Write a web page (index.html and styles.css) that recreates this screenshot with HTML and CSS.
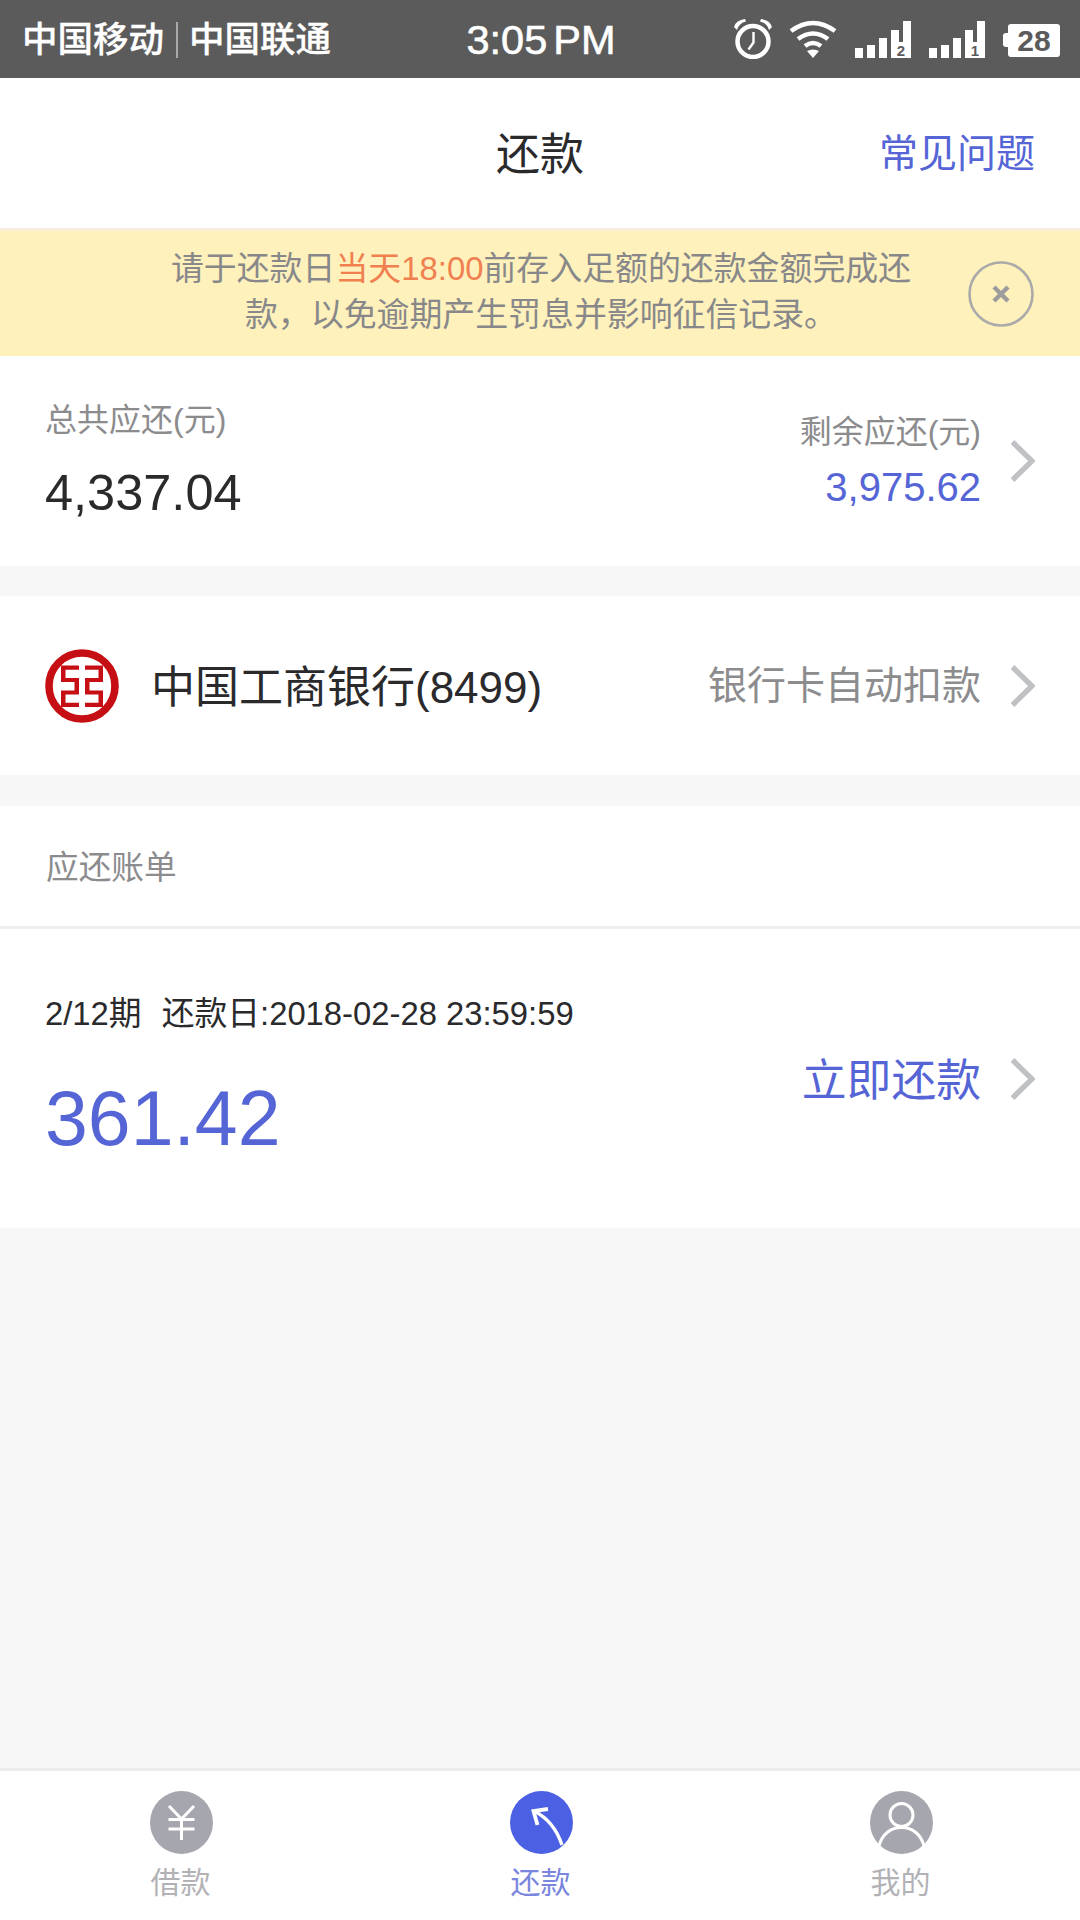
FILE: index.html
```html
<!DOCTYPE html>
<html lang="zh-CN">
<head>
<meta charset="utf-8">
<title>还款</title>
<link rel="stylesheet" href="styles.css">
</head>
<body>
<div class="app">
  <header class="status">
    <div class="carriers"><span>中国移动</span><i class="carrier-sep"></i><span>中国联通</span></div>
    <div class="clock">3:05<span class="ampm">PM</span></div>
    <div class="status-icons">
      <svg class="ic-alarm" width="38" height="40" viewBox="0 0 38 40"><circle cx="19" cy="22.500" r="15.500" fill="none" stroke="#fff" stroke-width="4.500"/><path d="M19.500 13v10.500l-5 7" fill="none" stroke="#fff" stroke-width="2.400"/><path d="M0 8Q2 1 11 0L12 2.500Q5 4 3 11ZM38 8Q36 1 27 0L26 2.500Q33 4 35 11Z" fill="#fff"/></svg>
      <svg class="ic-wifi" width="48" height="38" viewBox="0 0 48 38"><g fill="none" stroke="#fff" stroke-width="4.600"><path d="M2 11Q24-5 46 11"/><path d="M9 19Q24 8 39 19"/><path d="M16 26Q24 20 32 26"/></g><path d="M18 31Q24 28 30 31L24 38Z" fill="#fff"/></svg>
      <svg class="ic-sig" width="56" height="37" viewBox="0 0 56 37"><path d="M0 27h8v10H0zM12 24h8v13h-8zM24 17h8v20h-8zM36 9h8v12h4V0h8v37H36z" fill="#fff"/><text x="46" y="35" class="sig-num">2</text></svg>
      <svg class="ic-sig" width="56" height="37" viewBox="0 0 56 37"><path d="M0 27h8v10H0zM12 24h8v13h-8zM24 17h8v20h-8zM36 9h8v12h4V0h8v37H36z" fill="#fff"/><text x="46" y="35" class="sig-num">1</text></svg>
      <div class="battery"><i class="battery-tip"></i><span class="battery-body">28</span></div>
    </div>
  </header>

  <nav class="navbar">
    <h1 class="nav-title">还款</h1>
    <a class="nav-link">常见问题</a>
  </nav>

  <section class="notice">
    <p class="notice-text">请于还款日<span class="hl">当天18:00</span>前存入足额的还款金额完成还款，以免逾期产生罚息并影响征信记录。</p>
    <svg class="notice-close" width="66" height="66" viewBox="0 0 66 66"><circle cx="33" cy="33" r="31.500" fill="none" stroke="#aaaaaa" stroke-width="2.600"/><path d="M26 26l14 14M40 26L26 40" fill="none" stroke="#9c9c9c" stroke-width="4.400"/></svg>
  </section>

  <section class="card summary">
    <div class="summary-left">
      <div class="label">总共应还(元)</div>
      <div class="total">4,337.04</div>
    </div>
    <div class="summary-right">
      <div class="label">剩余应还(元)</div>
      <div class="remain">3,975.62</div>
    </div>
    <svg class="chev" width="24" height="44" viewBox="0 0 24 44"><path d="M1.500 3L21 22 1.500 41" fill="none" stroke="#c0c1c5" stroke-width="5.400"/></svg>
  </section>

  <section class="card bank">
    <svg class="bank-logo" width="74" height="74" viewBox="0 0 74 74">
      <circle cx="37" cy="37" r="33" fill="none" stroke="#c50f14" stroke-width="7.600"/>
      <path d="M16 16.500H34v4.200H20.500V29H34v16.500H20.500v8.300H34V58H16V41.500H29.500V33H16zM58 16.500H40v4.200H53.500V29H40v16.500H53.500v8.300H40V58H58V41.500H44.500V33H58z" fill="#c50f14"/>
    </svg>
    <div class="bank-name">中国工商银行(8499)</div>
    <div class="bank-mode">银行卡自动扣款</div>
    <svg class="chev" width="24" height="44" viewBox="0 0 24 44"><path d="M1.500 3L21 22 1.500 41" fill="none" stroke="#c0c1c5" stroke-width="5.400"/></svg>
  </section>

  <section class="bills">
    <div class="bills-head">应还账单</div>
    <div class="bill">
      <div class="bill-info">
        <div class="bill-meta">2/12期<span class="meta-gap"></span>还款日:2018-02-28 23:59:59</div>
        <div class="bill-amount">361.42</div>
      </div>
      <div class="bill-action">立即还款</div>
      <svg class="chev" width="24" height="44" viewBox="0 0 24 44"><path d="M1.500 3L21 22 1.500 41" fill="none" stroke="#c0c1c5" stroke-width="5.400"/></svg>
    </div>
  </section>

  <div class="spacer"></div>

  <footer class="tabbar">
    <div class="tab">
      <svg class="tab-icon" width="63" height="63" viewBox="0 0 63 63"><circle cx="31.500" cy="31.500" r="31.500" fill="#a6a6ae"/><path d="M19 15l12.500 13L44 15M18.500 28.500h26M18.500 38h26M31.500 28v21" fill="none" stroke="#fff" stroke-width="3"/></svg>
      <span class="tab-label">借款</span>
    </div>
    <div class="tab tab-active">
      <svg class="tab-icon" width="63" height="63" viewBox="0 0 63 63"><circle cx="31.500" cy="31.500" r="31.500" fill="#4b60e2"/><path d="M52 54C47 39 38 27 24 20" fill="none" stroke="#fff" stroke-width="3.400"/><path d="M38 18L23.500 20l4 14" fill="none" stroke="#fff" stroke-width="3.800"/></svg>
      <span class="tab-label">还款</span>
    </div>
    <div class="tab">
      <svg class="tab-icon" width="63" height="63" viewBox="0 0 63 63"><circle cx="31.500" cy="31.500" r="31.500" fill="#a6a6ae"/><circle cx="31.500" cy="24" r="11.500" fill="none" stroke="#fff" stroke-width="3"/><path d="M9 55C12 43 21 36.500 31.500 36.500S51 43 54 55" fill="none" stroke="#fff" stroke-width="3"/></svg>
      <span class="tab-label">我的</span>
    </div>
  </footer>
</div>
</body>
</html>
```

FILE: styles.css
```css
* { box-sizing: border-box; }
html, body { margin: 0; padding: 0; }
body {
  width: 1080px;
  height: 1920px;
  overflow: hidden;
  font-family: "Liberation Sans", "Noto Sans CJK SC", sans-serif;
  color: #2a2a2c;
  background: #f7f7f7;
}
.app { height: 1920px; display: flex; flex-direction: column; }

.status {
  height: 78px;
  flex: none;
  background: #5b5b5b;
  color: #fff;
  display: grid;
  grid-template-columns: 1fr auto 1fr;
  align-items: center;
  padding: 2px 20px 0 22px;
}
.carriers { display: flex; align-items: center; font-size: 35.500px; font-weight: 500; line-height: 40px; -webkit-text-stroke: .3px #fff; }
.carrier-sep { width: 2px; height: 36px; background: #a9a9a9; margin: 0 11px 0 12px; }
.clock { font-size: 41.500px; line-height: 46px; -webkit-text-stroke: .6px #fff; }
.ampm { margin-left: 6px; }
.status-icons { display: flex; align-items: center; justify-content: flex-end; margin-top: -2px; }
.ic-alarm { margin-right: 17px; }
.ic-wifi { margin-right: 18px; }
.ic-sig { margin-right: 18px; }
.sig-num { font-family: "Liberation Sans", sans-serif; font-size: 15px; font-weight: 700; fill: #5b5b5b; text-anchor: middle; }
.battery { display: flex; align-items: center; margin-top: 2px; }
.battery-tip { width: 5px; height: 14px; background: #fff; border-radius: 3px 0 0 3px; }
.battery-body {
  width: 52px; height: 33px; background: #fff; border-radius: 3px;
  color: #5b5b5b; font-size: 30px; font-weight: 700; line-height: 33px; text-align: center;
}

.navbar {
  height: 150px;
  flex: none;
  background: #fff;
  display: flex;
  align-items: center;
  justify-content: center;
  position: relative;
  padding-top: 3px;
}
.nav-title { margin: 0; font-size: 44px; font-weight: 400; line-height: 60px; color: #2a2a2c; }
.nav-link { position: absolute; right: 45px; top: 50%; transform: translateY(-48%); font-size: 39px; line-height: 50px; color: #5565d6; }

.notice {
  height: 128px;
  flex: none;
  background: #fef1bb;
  border-top: 3px solid #f9eedd;
  display: flex;
  align-items: center;
  padding: 0 35px 0 169px;
  color: #88888a;
}
.notice-text { margin: 0 0 3px; width: 744px; font-size: 32.900px; line-height: 46px; text-align: center; }
.hl { color: #f08050; }
.notice-close { margin-left: 55px; flex: none; }

.card { background: #fff; display: flex; align-items: center; padding: 0 45px; }
.label { font-size: 32px; line-height: 40px; color: #8c8c8e; }
.chev { flex: none; margin-left: 30px; }

.summary { height: 210px; flex: none; }
.summary-left { flex: 1; margin-top: 6px; }
.summary-left .label { transform: translateY(-6px); }
.total { font-size: 50.500px; line-height: 60px; margin-top: 17px; color: #2a2a2c; }
.summary-right { text-align: right; margin-top: 1px; }
.remain { font-size: 40px; line-height: 50px; color: #5565d6; margin-top: 10px; }

.bank { height: 179px; flex: none; margin-top: 30px; }
.bank-logo { flex: none; }
.bank-name { flex: 1; margin-left: 32px; margin-top: 4px; font-size: 44px; line-height: 60px; color: #2a2a2c; }
.bank-mode { font-size: 39px; line-height: 50px; color: #8c8c8e; margin-top: 1px; }

.bills { margin-top: 31px; flex: none; background: #fff; }
.bills-head {
  height: 123px;
  padding: 45px 0 0 46px;
  font-size: 32.700px;
  line-height: 34px;
  color: #8c8c8e;
  border-bottom: 3px solid #efefef;
}
.bill { height: 299px; display: flex; align-items: center; padding: 0 45px; }
.bill-info { flex: 1; margin-top: -1px; }
.bill-meta { font-size: 32.800px; line-height: 40px; color: #2a2a2c; display: flex; align-items: center; }
.meta-gap { width: 20px; }
.bill-amount { font-size: 77px; line-height: 90px; margin-top: 39px; color: #5565d6; }
.bill-action { font-size: 44.800px; line-height: 56px; color: #5565d6; margin-top: 2px; }

.spacer { flex: 1; }

.tabbar {
  height: 152px;
  flex: none;
  background: #fff;
  border-top: 3px solid #ededed;
  display: grid;
  grid-template-columns: repeat(3, 360px);
  padding: 20px 0 0 1px;
}
.tab { display: flex; flex-direction: column; align-items: center; }
.tab-icon { display: block; }
.tab-label { font-size: 30px; line-height: 40px; margin: 9px 1px 0 0; color: #b2b2b6; }
.tab-active .tab-label { color: #7a86de; }
```
